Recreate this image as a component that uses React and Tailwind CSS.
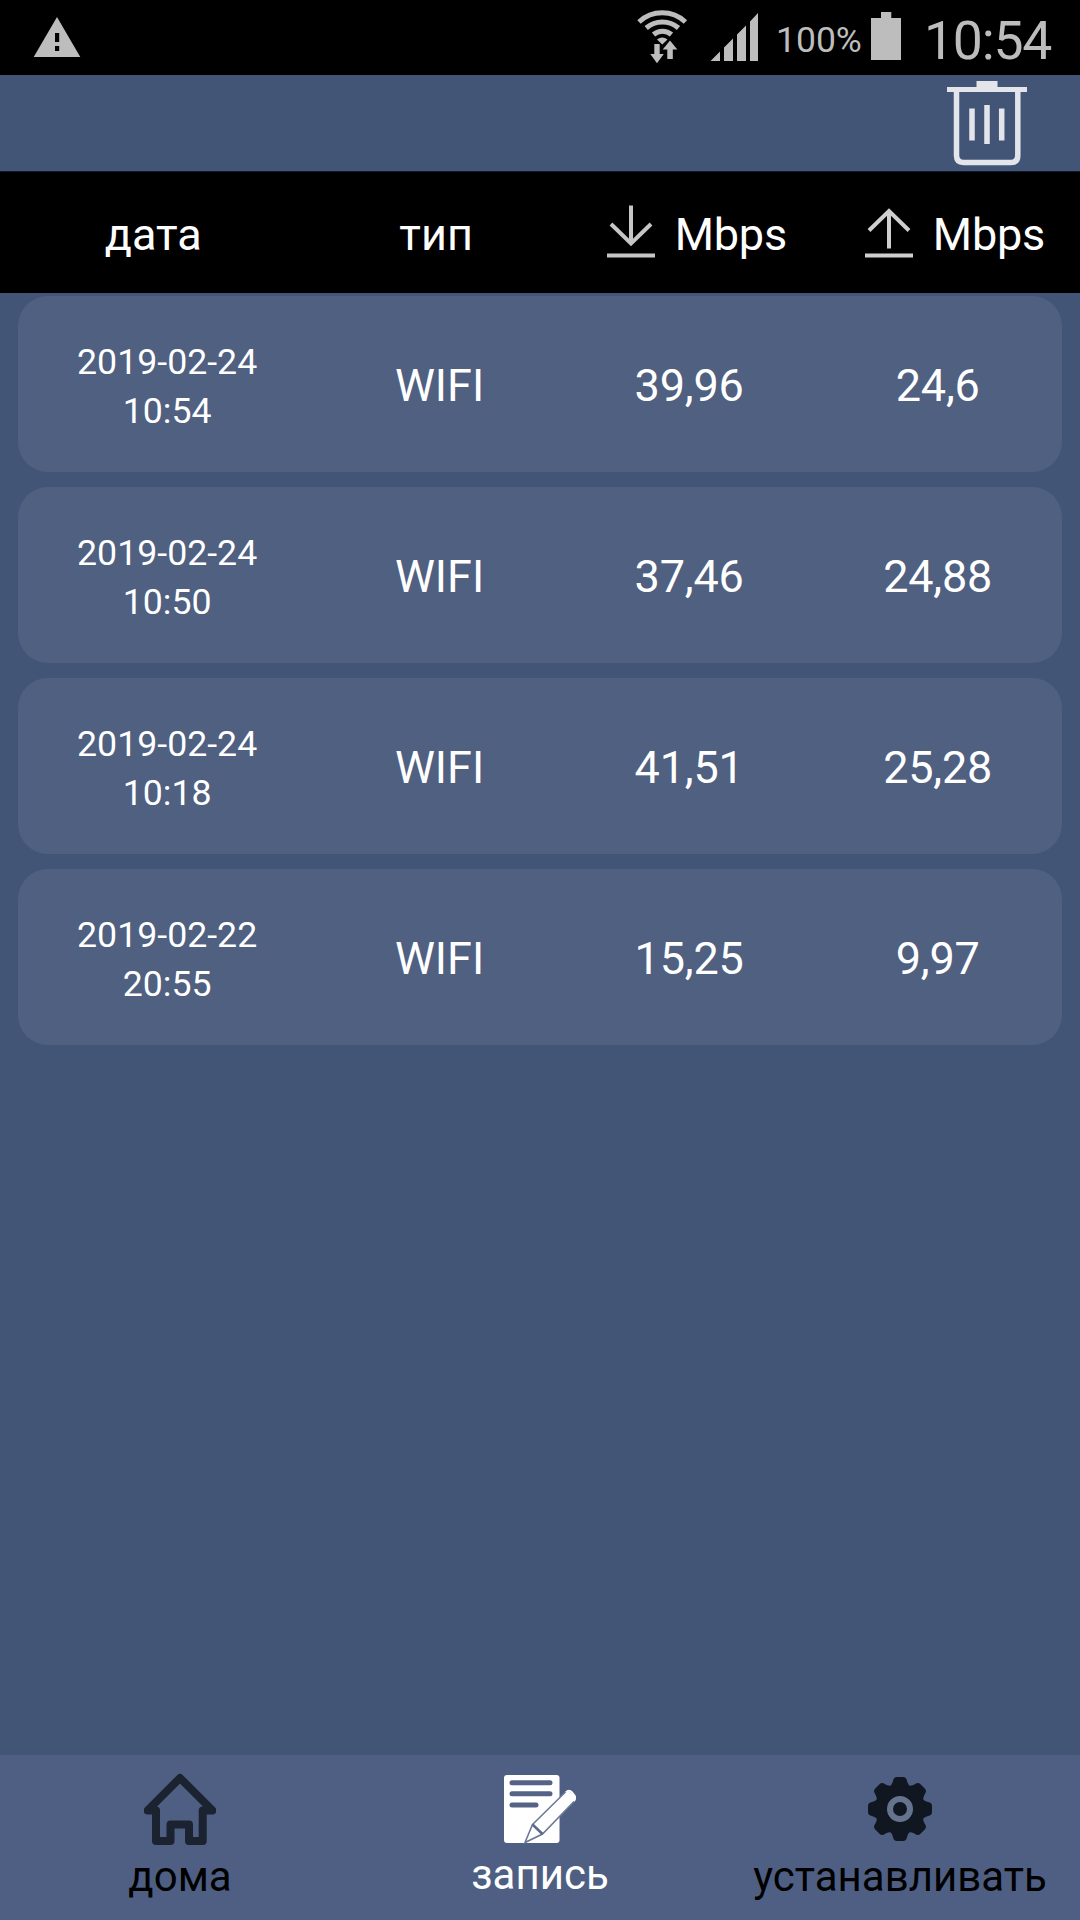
const records = [
  { date: "2019-02-24", time: "10:54", type: "WIFI", down: "39,96", up: "24,6" },
  { date: "2019-02-24", time: "10:50", type: "WIFI", down: "37,46", up: "24,88" },
  { date: "2019-02-24", time: "10:18", type: "WIFI", down: "41,51", up: "25,28" },
  { date: "2019-02-22", time: "20:55", type: "WIFI", down: "15,25", up: "9,97" },
];

function StatusBar() {
  return (
    <div className="flex h-[75px] shrink-0 items-start bg-black pr-[25px] pl-[33px] text-[#bdbdbd]">
      <svg className="mt-[16px] h-[42px] w-[48px]" viewBox="0 0 48 42" fill="currentColor">
        <path fillRule="evenodd" d="M24 1L47.300 41H.7ZM22 17V26H26.200V17ZM22 30V35H26.200V30Z" />
      </svg>
      <svg className="ml-auto h-[56px] w-[52px] mt-[9px]" viewBox="636 9 52 56" fill="none" stroke="currentColor" strokeWidth="5">
        <path d="M639 22A34 34 0 0 1 685.400 22M646.200 28A24.500 24.500 0 0 1 678.500 28M653.500 34.500A14 14 0 0 1 671.500 34.500" />
        <path stroke="none" fill="currentColor" d="M657 39.500Q662.300 35.500 667.500 39.500L662.300 44.500ZM654.300 44H659.700V54H663.800L657 63.300L650.300 54H654.300ZM670 40.500L677.300 49.500H672.800V59H667.300V49.500H662.700Z" />
      </svg>
      <svg className="mt-[12px] ml-[22px] h-[50px] w-[49px]" viewBox="710 12 49 50" fill="currentColor">
        <path d="M710.500 61L720 51.500V61ZM724 61V47.500L733 38.500V61ZM737 61V34.500L746 25.500V61ZM750 61V21.500L758 13V61Z" />
      </svg>
      <span className="mt-[19px] ml-[17px] w-[87px] text-[35.500px] leading-[43px] whitespace-nowrap">100%</span>
      <svg className="mt-[12px] ml-[8px] h-[48px] w-[30px]" viewBox="0 0 30 48" fill="currentColor">
        <path d="M10 0H20.300V6H30V48H0V6H10Z" />
      </svg>
      <span className="mt-[11px] ml-[23px] w-[131px] text-[53.500px] leading-[60px] tracking-[-1.200px] whitespace-nowrap">10:54</span>
    </div>
  );
}

function TrashIcon() {
  return (
    <svg className="h-[86px] w-[82px]" viewBox="946 80 82 86" fill="none" stroke="#e4e5eb" strokeWidth="5.500">
      <path d="M947 89.500H1027" strokeWidth="5" />
      <path d="M976.500 84H997.500" strokeWidth="6" />
      <path d="M956.500 90V155.500Q956.500 162.400 963.500 162.400H1011Q1017.800 162.400 1017.800 155.500V90" />
      <path d="M972 108.500V140.500M987 105V144M1001.700 108.500V140.500" />
    </svg>
  );
}

function DownloadIcon() {
  return (
    <svg className="mb-[3px] h-[54px] w-[50px]" viewBox="606 204 50 54" fill="none" stroke="#c6c6c6" strokeWidth="4">
      <path d="M631 205.500V243M611 224L631 243.500L651 224M607 255.500H655" />
    </svg>
  );
}

function UploadIcon() {
  return (
    <svg className="mb-[3px] h-[54px] w-[50px]" viewBox="864 204 50 54" fill="none" stroke="#cfcfcf" strokeWidth="4">
      <path d="M889 248.500V211M869 230.500L889 211L909 230.500M865 255.500H913" />
    </svg>
  );
}

function HomeIcon() {
  return (
    <svg className="h-[72px] w-[72px]" viewBox="0 0 72 72" fill="none" stroke="#1b2230" strokeWidth="8" strokeLinejoin="round">
      <path d="M12 37.500H3.500L36 5L68.500 37.500H58.700V68H45V51.500H26.500V68H12Z" />
    </svg>
  );
}

function RecordIcon() {
  return (
    <svg className="h-[72px] w-[72px]" viewBox="0 -2 72 72">
      <rect width="55.500" height="68" rx="3" fill="#fff" />
      <path d="M8 7.700H46M8 18.700H46M8 30H32" stroke="#556486" strokeWidth="5" strokeLinecap="round" />
      <path d="M28.500 49.500L61 17.500Q64.500 14 68 17.500L70.500 20Q73 23 70 26.500L38.500 59L21 67.500Z" fill="#fff" stroke="#6c7994" strokeWidth="1.600" />
      <path d="M28.500 49.500L38.500 59" stroke="#5b6a8b" strokeWidth="2.500" />
      <path d="M62 17.500Q65 14 68 17.500L70 20Q72.500 23 69.500 26" fill="none" stroke="#fff" strokeWidth="2" />
    </svg>
  );
}

function GearIcon() {
  const angles = [0, 45, 90, 135, 180, 225, 270, 315];
  return (
    <svg className="h-[66px] w-[66px]" viewBox="-33 -33 66 66" fill="#111720">
      {angles.map((a) => (
        <path key={a} transform={`rotate(${a})`} d="M-10.500 -22Q-7.500 -25 -7 -28Q-6.500 -32 -3 -32H3Q6.500 -32 7 -28Q7.500 -25 10.500 -22Z" />
      ))}
      <circle r="24.500" />
      <circle r="10" fill="none" stroke="#65738f" strokeWidth="6" />
    </svg>
  );
}

function TableHeader() {
  return (
    <div className="grid h-[121px] shrink-0 grid-cols-[6fr_5fr_5fr_5fr] items-center bg-black text-[45px] leading-[53px] text-white">
      <span className="pt-[3px] pr-[2px] text-center">дата</span>
      <span className="pt-[3px] pr-[2px] text-center">тип</span>
      <div className="flex items-center pl-[40px]">
        <DownloadIcon />
        <span className="ml-[19px] pt-[3px] tracking-[-0.200px]">Mbps</span>
      </div>
      <div className="flex items-center pl-[41px]">
        <UploadIcon />
        <span className="ml-[19px] pt-[3px] tracking-[-0.200px]">Mbps</span>
      </div>
    </div>
  );
}

function RecordRow({ record }) {
  return (
    <div className="grid h-[176px] grid-cols-[6fr_5fr_5fr_5fr] items-center rounded-[30px] bg-[#4f6081] text-center text-[45px] leading-[53px] text-white">
      <div className="flex flex-col pt-[5px] text-[35.700px] leading-[49px]">
        <span>{record.date}</span>
        <span>{record.time}</span>
      </div>
      <span className="pt-[2px] pr-[2px]">{record.type}</span>
      <span className="pt-[2px] tracking-[-0.200px]">{record.down}</span>
      <span className="pt-[2px] tracking-[-0.200px]">{record.up}</span>
    </div>
  );
}

function NavBar() {
  return (
    <nav className="grid h-[165px] shrink-0 grid-cols-3 bg-[#4e5f83] text-[42px] leading-[53px] text-black">
      <div className="flex flex-col items-center pt-[18px]">
        <HomeIcon />
        <span className="mt-[5px]">дома</span>
      </div>
      <div className="flex flex-col items-center pt-[18px] text-white">
        <RecordIcon />
        <span className="mt-[3px]">запись</span>
      </div>
      <div className="flex flex-col items-center pt-[21px]">
        <GearIcon />
        <span className="mt-[8px]">устанавливать</span>
      </div>
    </nav>
  );
}

export default function App() {
  return (
    <div className="flex h-[1920px] w-[1080px] flex-col overflow-hidden bg-[#435577] font-['Roboto',sans-serif]">
      <StatusBar />
      <header className="flex h-[97px] shrink-0 items-start justify-end border-b border-[#101a2c] pt-[5px] pr-[52px]">
        <TrashIcon />
      </header>
      <TableHeader />
      <main className="flex grow flex-col gap-[15px] px-[18px] pt-[3px]">
        {records.map((record) => (
          <RecordRow key={record.date + record.time} record={record} />
        ))}
      </main>
      <NavBar />
    </div>
  );
}
